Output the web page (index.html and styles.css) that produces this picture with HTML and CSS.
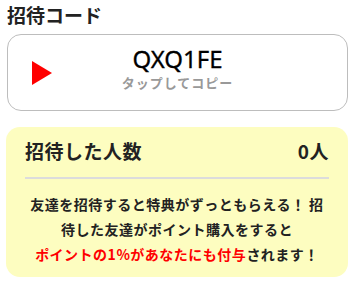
FILE: index.html
```html
<!DOCTYPE html>
<html lang="ja">
<head>
<meta charset="utf-8">
<link rel="stylesheet" href="styles.css">
</head>
<body>
<div class="page">
  <h2 class="title">招待コード</h2>
  <div class="code-box">
    <svg class="play" width="20" height="24" viewBox="0 0 20 24"><polygon points="0,0 20,12 0,24" fill="#ff0000"/></svg>
    <div class="code-text">
      <div class="code">QXQ1FE</div>
      <div class="hint">タップしてコピー</div>
    </div>
  </div>
  <div class="stats">
    <div class="stats-head">
      <span>招待した人数</span>
      <span>0人</span>
    </div>
    <hr class="divider">
    <p class="desc">友達を招待すると特典がずっともらえる！ 招待した友達がポイント購入をすると<br><span class="red">ポイントの1%があなたにも付与</span>されます！</p>
  </div>
</div>
</body>
</html>
```

FILE: styles.css
```css
html, body {
  margin: 0;
  padding: 0;
  background: #ffffff;
}
body {
  font-family: "Noto Sans CJK JP", "Noto Sans", sans-serif;
  color: #222222;
}
.page {
  padding: 1px 6px 0 7px;
}
.title {
  margin: 0 0 5px 0;
  font-size: 19px;
  line-height: 28px;
  font-weight: 700;
  color: #222222;
}
.code-box {
  position: relative;
  box-sizing: border-box;
  width: 341px;
  height: 77px;
  border: 1px solid #bdbdbd;
  border-radius: 14px;
  display: flex;
  align-items: center;
  justify-content: center;
}
.play {
  position: absolute;
  left: 24px;
  top: 26px;
}
.code-text {
  display: flex;
  flex-direction: column;
  align-items: center;
  padding-bottom: 10px;
}
.code {
  font-family: "Noto Sans", sans-serif;
  font-size: 24px;
  line-height: 30px;
  color: #000000;
  font-weight: 400;
  -webkit-text-stroke: 0.3px #000000;
}
.hint {
  font-size: 13px;
  line-height: 18px;
  font-weight: 700;
  letter-spacing: 1px;
  color: #999999;
}
.stats {
  box-sizing: border-box;
  margin: 16px 0 0 -1px;
  width: 342px;
  background: #fdfdc0;
  border-radius: 14px;
  padding: 9px 19px 10px 19px;
}
.stats-head {
  display: flex;
  justify-content: space-between;
  font-size: 19px;
  line-height: 30px;
  font-weight: 700;
  letter-spacing: 0.5px;
}
.divider {
  border: 0;
  height: 2px;
  background: #dcdcdc;
  margin: 11px 0 0 0;
}
.desc {
  margin: 13px 0 0 0;
  text-align: center;
  font-size: 14px;
  line-height: 25px;
  font-weight: 700;
  letter-spacing: 0.5px;
}
.red {
  color: #ff0000;
}
```
